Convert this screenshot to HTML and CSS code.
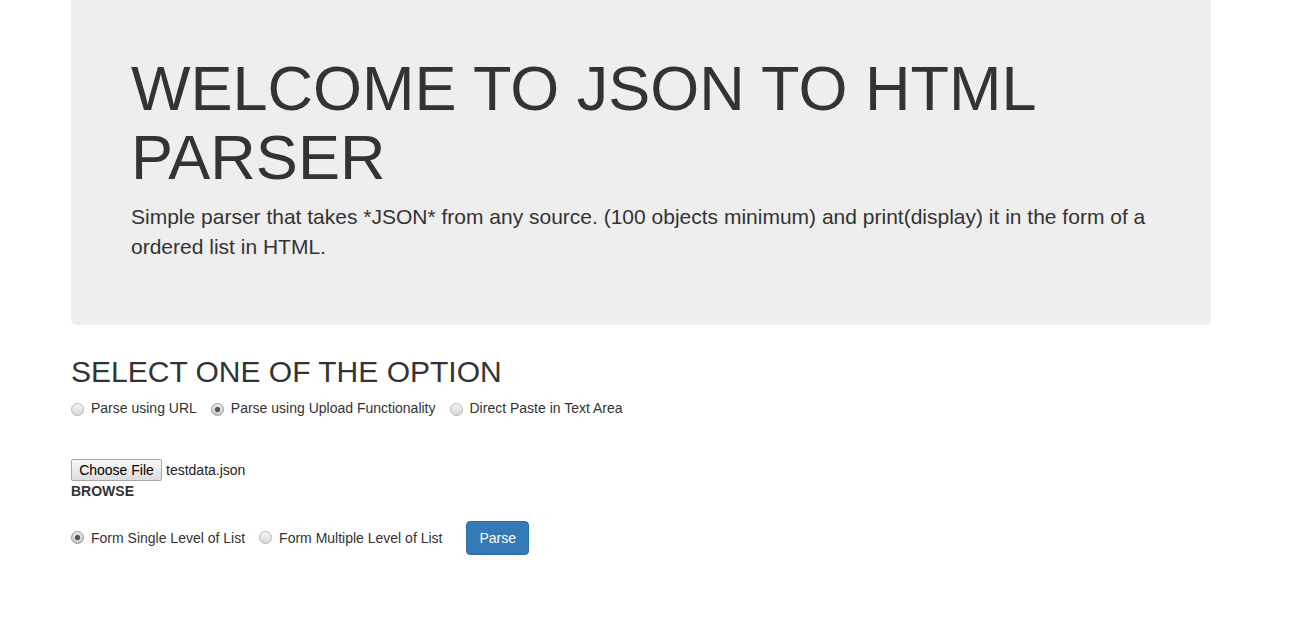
FILE: index.html
```html
<!DOCTYPE html>
<html lang="en">
<head>
<meta charset="utf-8">
<title>JSON to HTML Parser</title>
<link rel="stylesheet" href="styles.css">
</head>
<body>
<div class="container">
  <div class="jumbotron">
    <h1>WELCOME TO JSON TO HTML PARSER</h1>
    <p>Simple parser that takes *JSON* from any source. (100 objects minimum) and print(display) it in the form of a ordered list in HTML.</p>
  </div>

  <h2>SELECT ONE OF THE OPTION</h2>
  <div class="options">
    <label class="radio"><span class="dot"></span>Parse using URL</label>
    <label class="radio"><span class="dot checked"></span>Parse using Upload Functionality</label>
    <label class="radio"><span class="dot"></span>Direct Paste in Text Area</label>
  </div>

  <div class="file-row">
    <span class="file-btn">Choose File</span>
    <span class="file-name">testdata.json</span>
  </div>
  <div class="browse">BROWSE</div>

  <div class="options action-row">
    <label class="radio"><span class="dot checked"></span>Form Single Level of List</label>
    <label class="radio"><span class="dot"></span>Form Multiple Level of List</label>
    <button class="btn-primary" type="button">Parse</button>
  </div>
</div>
</body>
</html>
```

FILE: styles.css
```css
html, body {
  margin: 0;
  padding: 0;
  background: #fff;
}

body {
  font-family: "Liberation Sans", Arial, Helvetica, sans-serif;
  font-size: 14px;
  line-height: 20px;
  color: #333;
}

.container {
  width: 1140px;
  margin-left: 71px;
}

.jumbotron {
  background: #eee;
  border-radius: 0 0 6px 6px;
  padding: 33.5px 60px 48px;
  margin-bottom: 30px;
}

.jumbotron h1 {
  font-size: 63px;
  line-height: 1.1;
  font-weight: normal;
  margin: 20px 0 10px;
  color: #333;
}

.jumbotron p {
  font-size: 21px;
  line-height: 30px;
  margin: 0 0 15px;
}

h2 {
  font-size: 30px;
  line-height: 33px;
  font-weight: normal;
  margin: 0 0 10px;
  color: #333;
}

.options {
  display: flex;
  align-items: flex-start;
  gap: 14px;
  margin-top: 4px;
}

.radio {
  display: flex;
  align-items: flex-start;
  line-height: 20px;
  color: #333;
}

.dot {
  box-sizing: border-box;
  width: 13px;
  height: 13px;
  margin: 5px 7px 0 0;
  border-radius: 50%;
  border: 1px solid #b4b4b4;
  background: linear-gradient(#f5f5f5, #d8d8d8);
  flex: none;
}

.dot.checked {
  border-color: #9a9a9a;
  background: radial-gradient(circle at 50% 50%, #555 0, #555 2.2px, rgba(85,85,85,0) 3px), linear-gradient(#e8e8e8, #c8c8c8);
}

.file-row {
  display: flex;
  align-items: center;
  margin-top: 40.6px;
  height: 22px;
}

.file-btn {
  box-sizing: border-box;
  height: 22px;
  width: 91px;
  border: 1px solid #a6a6a6;
  border-radius: 2px;
  background: linear-gradient(#f8f8f8, #dddddd);
  color: #000;
  font-size: 14px;
  line-height: 20px;
  text-align: center;
}

.file-name {
  margin-left: 4px;
  color: #222;
}

.browse {
  font-weight: bold;
  line-height: 20px;
  margin-top: 0.4px;
}

.action-row {
  align-items: center;
  margin-top: 19.6px;
  height: 34px;
}

.action-row .dot {
  margin-top: 0;
}

.action-row .radio {
  align-items: center;
}

.btn-primary {
  box-sizing: border-box;
  height: 34px;
  padding: 6px 12px;
  margin-left: 10px;
  font-family: "Liberation Sans", Arial, Helvetica, sans-serif;
  font-size: 14px;
  line-height: 20px;
  color: #fff;
  background: #337ab7;
  border: 1px solid #2e6da4;
  border-radius: 4px;
}
```
